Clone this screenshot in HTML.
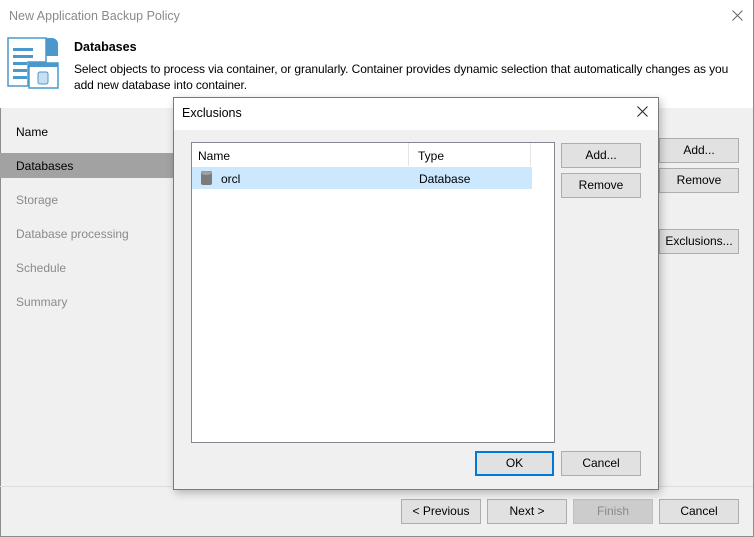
<!DOCTYPE html>
<html><head><style>
*{box-sizing:border-box;margin:0;padding:0}
body{width:754px;height:537px;overflow:hidden;font-family:"Liberation Sans",sans-serif;font-size:12px;color:#000;background:#f0f0f0;position:relative}
.abs{position:absolute}
.btn{position:absolute;height:25px;background:#e1e1e1;border:1px solid #adadad;text-align:center;line-height:23px;font-size:12px;color:#000}
.nav{position:absolute;left:16px;font-size:12px;color:#000}
.dis{color:#8a8a8a}
</style></head><body>
<div class="abs" style="left:0;top:0;width:754px;height:537px;border:1px solid #8c8c8c;border-top:none"></div>
<div class="abs" style="left:0;top:0;width:753px;height:108px;background:#fff"></div>
<div class="abs" style="left:9px;top:9px;font-size:12.5px;color:#8a8a8a">New Application Backup Policy</div>
<svg class="abs" style="left:732px;top:10px" width="11" height="11"><path d="M0.5 0.5 L10.5 10.5 M10.5 0.5 L0.5 10.5" stroke="#666" stroke-width="1"/></svg>
<svg class="abs" style="left:6px;top:36px" width="54" height="54" viewBox="0 0 54 54">
<path d="M2 2 H46 A6 6 0 0 1 52 8 V20 H40 V8 A6 6 0 0 0 34 2" fill="#4a98cc"/>
<path d="M2 2 H40 V26 H22 V50 H2 Z" fill="#fff" stroke="#4a98cc" stroke-width="1.5"/>
<rect x="7" y="12" width="20" height="3" fill="#4a98cc"/>
<rect x="7" y="19" width="20" height="3" fill="#4a98cc"/>
<rect x="7" y="26" width="14" height="3" fill="#4a98cc"/>
<rect x="7" y="33" width="14" height="3" fill="#4a98cc"/>
<rect x="7" y="40" width="14" height="3" fill="#4a98cc"/>
<rect x="23" y="27" width="29" height="25" fill="#fff" stroke="#4a98cc" stroke-width="1.5"/>
<rect x="23" y="27" width="29" height="4" fill="#4a98cc"/>
<rect x="32" y="36" width="10" height="12" rx="2" fill="#c9dff0" stroke="#4a98cc"/>
</svg>
<div class="abs" style="left:74px;top:40px;font-weight:bold;font-size:12.5px">Databases</div>
<div class="abs" style="left:74px;top:61px;font-size:12px;line-height:16px;width:675px;letter-spacing:-0.1px">Select objects to process via container, or granularly. Container provides dynamic selection that automatically changes as you add new database into container.</div>
<div class="nav" style="top:125px">Name</div>
<div class="abs" style="left:0;top:153px;width:180px;height:25px;background:#a2a2a2"></div>
<div class="nav" style="top:159px">Databases</div>
<div class="nav dis" style="top:193px">Storage</div>
<div class="nav dis" style="top:227px">Database processing</div>
<div class="nav dis" style="top:261px">Schedule</div>
<div class="nav dis" style="top:295px">Summary</div>
<div class="btn" style="left:659px;top:138px;width:80px">Add...</div>
<div class="btn" style="left:659px;top:168px;width:80px">Remove</div>
<div class="btn" style="left:659px;top:229px;width:80px">Exclusions...</div>
<div class="abs" style="left:0;top:486px;width:753px;height:1px;background:#dcdcdc"></div>
<div class="btn" style="left:401px;top:499px;width:80px">&lt; Previous</div>
<div class="btn" style="left:487px;top:499px;width:80px">Next &gt;</div>
<div class="btn" style="left:573px;top:499px;width:80px;background:#cccccc;border-color:#bfbfbf;color:#8a8a8a">Finish</div>
<div class="btn" style="left:659px;top:499px;width:80px">Cancel</div>
<div class="abs" style="left:173px;top:97px;width:486px;height:393px;background:#f0f0f0;border:1px solid #7a7a7a;box-shadow:2px 3px 8px rgba(0,0,0,.25)"></div>
<div class="abs" style="left:174px;top:98px;width:484px;height:32px;background:#fff"></div>
<div class="abs" style="left:182px;top:106px;font-size:12.5px">Exclusions</div>
<svg class="abs" style="left:637px;top:106px" width="11" height="11"><path d="M0.5 0.5 L10.5 10.5 M10.5 0.5 L0.5 10.5" stroke="#222" stroke-width="1"/></svg>
<div class="abs" style="left:191px;top:142px;width:364px;height:301px;background:#fff;border:1px solid #828790"></div>
<div class="abs" style="left:408px;top:143px;width:1px;height:23px;background:#e5e5e5"></div>
<div class="abs" style="left:530px;top:143px;width:1px;height:23px;background:#e5e5e5"></div>
<div class="abs" style="left:198px;top:149px">Name</div>
<div class="abs" style="left:418px;top:149px">Type</div>
<div class="abs" style="left:192px;top:167px;width:340px;height:22px;background:#cce8ff"></div>
<svg class="abs" style="left:200px;top:170px" width="13" height="16"><rect x="1" y="1" width="11" height="14" rx="2" fill="#7b7b7b"/><ellipse cx="6.5" cy="3" rx="5.5" ry="2" fill="#a0a0a0"/></svg>
<div class="abs" style="left:221px;top:172px">orcl</div>
<div class="abs" style="left:419px;top:172px">Database</div>
<div class="btn" style="left:561px;top:143px;width:80px">Add...</div>
<div class="btn" style="left:561px;top:173px;width:80px">Remove</div>
<div class="btn" style="left:475px;top:451px;width:79px;border:2px solid #0078d7;line-height:21px">OK</div>
<div class="btn" style="left:561px;top:451px;width:80px">Cancel</div>
</body></html>
